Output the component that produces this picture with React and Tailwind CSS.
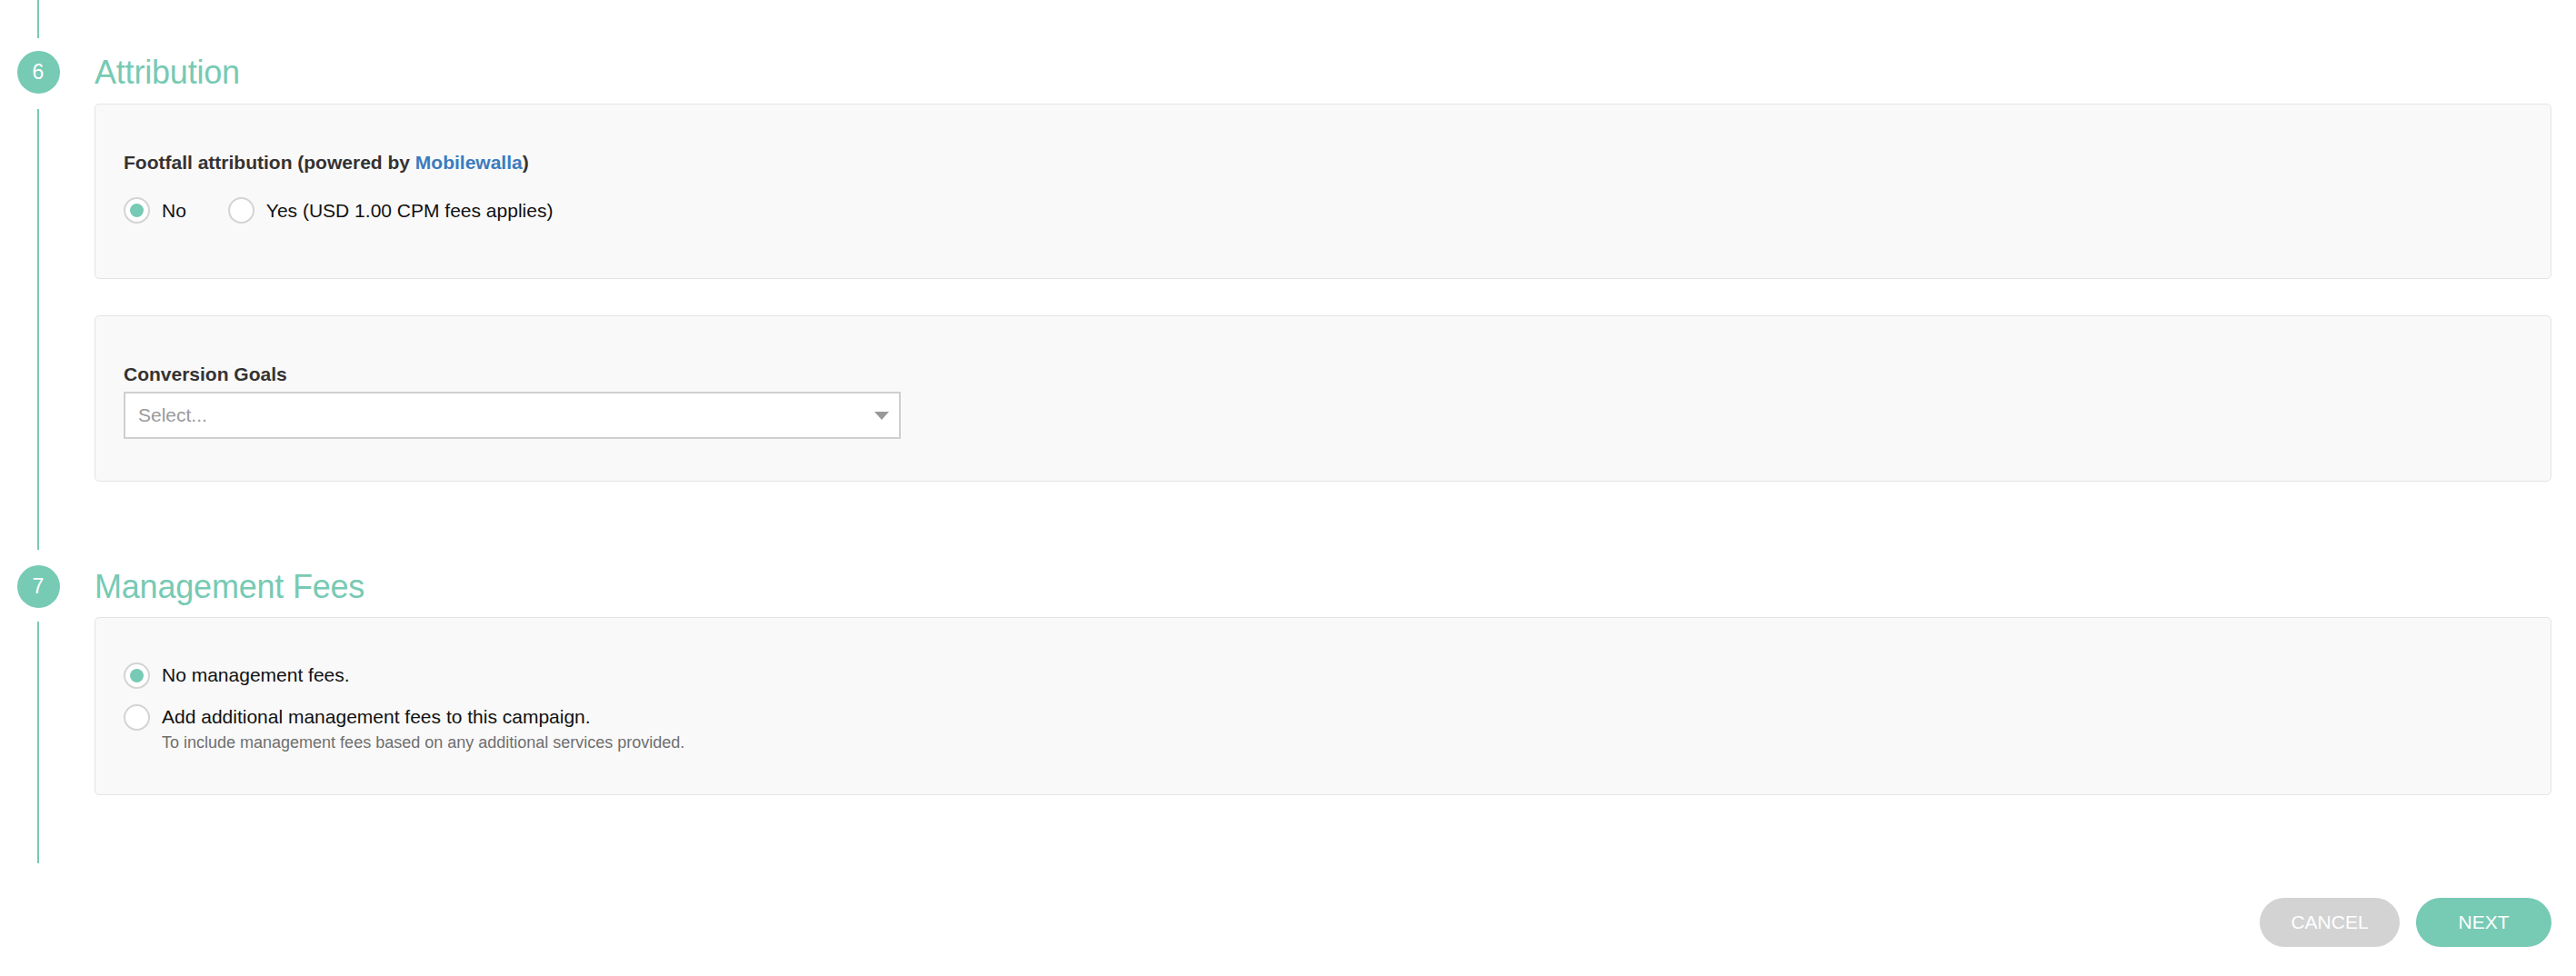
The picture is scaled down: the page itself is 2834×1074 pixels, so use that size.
import React from "react";

const TEAL = "bg-[#77cab4]";

function Radio({ checked }) {
  return (
    <span className="flex h-[29px] w-[29px] shrink-0 items-center justify-center rounded-full border-2 border-[#d4d4d4] bg-white">
      {checked ? <span className="h-[15px] w-[15px] rounded-full bg-[#77cab4]" /> : null}
    </span>
  );
}

function Card({ className = "", children }) {
  return (
    <div className={"rounded-[5px] border border-[#e4e4e4] bg-[#f9f9f9] px-[31px] " + className}>
      {children}
    </div>
  );
}

function StepRow({ num, title, lineTop, children, contentClass }) {
  return (
    <div className="flex">
      <div className="flex w-[84px] shrink-0 flex-col items-center">
        <div className={"flex h-[47px] w-[47px] items-center justify-center rounded-full text-[23px] text-white " + TEAL}>
          {num}
        </div>
        <div className={"w-[2px] flex-1 " + TEAL + " " + lineTop} />
      </div>
      <div className={"flex-1 pr-[27px] " + contentClass}>
        <div className="flex h-[47px] items-center pl-[20px]">
          <h2 className="text-[36px] font-normal leading-none tracking-[-0.2px] text-[#77cab4]">{title}</h2>
        </div>
        <div className="pl-[20px]">{children}</div>
      </div>
    </div>
  );
}

export default function App() {
  return (
    <div className="min-h-[1074px] w-full bg-white font-['Liberation_Sans',Arial,sans-serif] text-[#222]">
      {/* tail of previous step */}
      <div className="flex">
        <div className="flex w-[84px] justify-center">
          <div className={"h-[42px] w-[2px] " + TEAL} />
        </div>
      </div>

      <div className="mt-[14px]">
        <StepRow num="6" title="Attribution" lineTop="mt-[17px] mb-[17px]" contentClass="pb-[92px]">
          <Card className="mt-[11px] pt-[52px] pb-[60px]">
            <div className="text-[21px] font-bold leading-[24px] text-[#333]">
              Footfall attribution (powered by <span className="text-[#3d7bbd]">Mobilewalla</span>)
            </div>
            <div className="mt-[26px] flex h-[29px] items-center">
              <label className="flex items-center gap-[13px]">
                <Radio checked />
                <span className="text-[21px] leading-[24px] text-[#111]">No</span>
              </label>
              <label className="ml-[46px] flex items-center gap-[13px]">
                <Radio />
                <span className="text-[21px] leading-[24px] text-[#111]">Yes (USD 1.00 CPM fees applies)</span>
              </label>
            </div>
          </Card>

          <Card className="mt-[40px] pt-[52px] pb-[46px]">
            <div className="text-[21px] font-bold leading-[24px] text-[#333]">Conversion Goals</div>
            <div className="mt-[7px] flex h-[52px] w-[855px] items-center justify-between border-2 border-[#cfcfcf] bg-white pl-[14px] pr-[11px]">
              <span className="text-[21px] text-[#9a9a9a]">Select...</span>
              <svg width="16" height="9" viewBox="0 0 16 9">
                <path d="M0 0 L16 0 L8 9 Z" fill="#999" />
              </svg>
            </div>
          </Card>
        </StepRow>

        <StepRow num="7" title="Management Fees" lineTop="mt-[15px]" contentClass="pb-[75px]">
          <Card className="mt-[10px] pt-[49px] pb-[47px]">
            <label className="flex h-[28px] items-center gap-[13px]">
              <Radio checked />
              <span className="text-[21px] leading-[24px] text-[#111]">No management fees.</span>
            </label>
            <label className="mt-[18px] flex items-start gap-[13px]">
              <Radio />
              <span className="flex flex-col">
                <span className="text-[21px] leading-[28px] text-[#111]">Add additional management fees to this campaign.</span>
                <span className="mt-[4px] text-[18px] leading-[20px] text-[#6f6f6f]">
                  To include management fees based on any additional services provided.
                </span>
              </span>
            </label>
          </Card>
        </StepRow>
      </div>

      <div className="mt-[38px] flex justify-end gap-[18px] pr-[27px]">
        <button className="flex h-[54px] w-[154px] items-center justify-center rounded-full bg-[#d3d3d3] text-[21px] text-white">
          CANCEL
        </button>
        <button className="flex h-[54px] w-[149px] items-center justify-center rounded-full bg-[#77cab4] text-[21px] text-white">
          NEXT
        </button>
      </div>
    </div>
  );
}
